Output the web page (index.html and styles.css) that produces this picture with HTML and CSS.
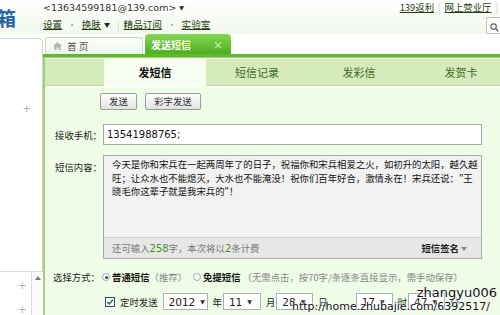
FILE: index.html
```html
<!DOCTYPE html>
<html lang="zh-CN">
<head>
<meta charset="utf-8">
<link rel="stylesheet" href="styles.css">
</head>
<body>
<div class="page">
  <header class="top">
    <div class="logo">箱</div>
    <div class="account">
      <div class="acct-line"><span class="email">&lt;13634599181@139.com&gt;</span><span class="caret">▼</span></div>
      <div class="menu"><a>设置</a><span class="dot">·</span><a>换肤</a><span class="caret">▼</span><span class="bar">|</span><a>精品订阅</a><span class="dot">·</span><a>实验室</a></div>
    </div>
    <div class="right">
      <div class="right-links"><a>139返利</a><span class="bar">|</span><a>网上营业厅</a><span class="bar">|</span></div>
      <div class="search"><svg width="9" height="9" viewBox="0 0 9 9"><circle cx="3.6" cy="3.6" r="2.7" fill="none" stroke="#666" stroke-width="1.2"/><path d="M5.6 5.6 L8.4 8.4" stroke="#666" stroke-width="1.4"/></svg></div>
    </div>
  </header>
  <div class="body">
    <aside class="side">
      <div class="side-card"><span class="plus plus-1">+</span></div>
      <div class="side-list">
        <div class="scroll"><span class="arrow-up"></span></div>
        <span class="plus">+</span>
        <span class="plus">+</span>
      </div>
    </aside>
    <main class="main">
      <div class="tabs">
        <div class="tab-home"><svg width="9" height="8" viewBox="0 0 9 8"><path d="M4.5 0 L9 4 H7.6 V8 H5.4 V5.4 H3.6 V8 H1.4 V4 H0 Z" fill="#b4b4b4"/></svg><span>首 页</span></div>
        <div class="tab-active"><span>发送短信</span><span class="close">×</span></div>
      </div>
      <div class="greenline"></div>
      <div class="panel">
        <div class="subtabs">
          <div class="stab-spacer"></div>
          <div class="stab on">发短信</div>
          <div class="stab">短信记录</div>
          <div class="stab">发彩信</div>
          <div class="stab">发贺卡</div>
        </div>
        <div class="content">
          <div class="actions"><button class="btn b-send">发送</button><button class="btn b-color">彩字发送</button></div>
          <div class="row row-phone">
            <label class="lbl">接收手机：</label>
            <div class="input">13541988765;</div>
          </div>
          <div class="row row-msg">
            <label class="lbl">短信内容：</label>
            <div class="textarea">
              <div class="msg">今天是你和宋兵在一起两周年了的日子，祝福你和宋兵相爱之火，如初升的太阳，越久越旺；让众水也不能熄灭，大水也不能淹没！祝你们百年好合，激情永在！宋兵还说："王晓毛你这辈子就是我宋兵的"！</div>
              <div class="ta-bar"><span class="count">还可输入<b>258</b>字，本次将以<b>2</b>条计费</span><span class="sign">短信签名<i class="tri"></i></span></div>
            </div>
          </div>
          <div class="row row-mode">
            <label class="lbl">选择方式：</label>
            <div class="modes">
              <span class="radio checked"></span><b>普通短信</b><span class="gray">（推荐）</span>
              <span class="radio"></span><b>免提短信</b><span class="gray hint">（无需点击，按70字/条逐条直接显示，需手动保存）</span>
            </div>
          </div>
          <div class="row row-time">
            <span class="lbl"></span>
            <div class="timer">
              <span class="check"><svg width="10" height="10" viewBox="0 0 10 10"><rect x="0.5" y="0.5" width="9" height="9" fill="#fff" stroke="#1f4f7f"/><path d="M2.2 5 L4.2 7 L7.8 2.8" fill="none" stroke="#2a6a2a" stroke-width="1.5"/></svg></span>
              <span class="tlabel">定时发送</span>
              <span class="sel w-year">2012<i class="dn">▼</i></span><span class="unit">年</span>
              <span class="sel w-month">11<i class="dn">▼</i></span><span class="unit">月</span>
              <span class="sel">28<i class="dn">▼</i></span><span class="unit">日</span>
              <span class="sel sel-hour">17<i class="dn">▼</i></span><span class="unit">时</span>
              <span class="sel">47<i class="dn">▼</i></span><span class="unit">分</span>
            </div>
          </div>
        </div>
      </div>
    </main>
  </div>
  <div class="watermark"><div class="wm1">zhangyu006</div><div class="wm2">http://home.zhubajie.com/6392517/</div></div>
</div>
</body>
</html>
```
FILE: styles.css
```css
*{box-sizing:border-box;margin:0;padding:0}
html,body{width:500px;height:315px;overflow:hidden;background:#fff}
body{font-family:"Noto Sans CJK SC","Noto Sans",sans-serif;font-size:9.4px;color:#222}
.page{position:relative;width:500px;height:315px;overflow:hidden}
a{color:#1e3e12;text-decoration:underline}

/* header */
.top{height:34px;display:flex;background:linear-gradient(#ffffff,#f1f8ec)}
.logo{width:44px;flex-shrink:0;margin-left:-3px;padding-top:7px;font-size:19px;font-weight:bold;color:#2463a8;line-height:22px}
.account{padding-left:2px;padding-top:1px}
.acct-line{font-family:"DejaVu Sans",sans-serif;font-size:9.5px;color:#333;line-height:13px;white-space:nowrap}
.caret{font-size:6px;margin-left:3px;color:#222;vertical-align:1px}
.menu{margin-top:3px;line-height:14px;white-space:nowrap;font-size:9.6px}
.menu .dot{color:#aaa;margin:0 5px}
.menu .caret{margin-left:3px;margin-right:3px}
.menu .bar,.right-links .bar{color:#ccc;margin:0 4px}
.right{margin-left:auto;display:flex;flex-direction:column;align-items:flex-end;padding-top:1px}
.right-links{line-height:13px;white-space:nowrap;font-size:9.4px;margin-right:-2px}
.search{width:16px;height:17px;margin-top:3px;margin-right:-2px;border:1px solid #b9c3b3;border-right:none;background:#fff;padding:3px 0 0 3px;border-radius:2px 0 0 2px}

/* body */
.body{display:flex;height:281px}
.side{width:43px;flex-shrink:0;display:flex;flex-direction:column}
.side-card{margin-top:4px;height:240px;border-top:1px solid #c8d9bc;border-right:1px solid #c8d9bc;border-top-right-radius:5px;display:flex;justify-content:flex-end;padding-right:11px;padding-top:65px}
.plus{color:#b0b0b0;font-size:10px;line-height:10px;font-family:"DejaVu Sans",sans-serif}
.side-list{flex:1;border-top:1px solid #d6ded1;position:relative;display:flex;flex-direction:column;align-items:flex-start;padding-left:18px;padding-top:9px;gap:14px}
.scroll{position:absolute;left:31px;top:0;bottom:0;width:12px;border-left:1px solid #dcdcdc;background:#fafafa}
.arrow-up{position:absolute;left:3px;top:4px;border:3px solid transparent;border-bottom:4px solid #777;border-top:none}

.main{flex:1;min-width:0;overflow:hidden;display:flex;flex-direction:column}
.tabs{height:20px;display:flex;align-items:flex-end;padding-left:2px}
.tab-home{width:98px;height:17px;border:1px solid #cbdcbd;border-bottom:none;border-radius:3px 3px 0 0;background:linear-gradient(#fdfefc,#eef5e9);display:flex;align-items:center;padding-left:7px;gap:5px;color:#555;font-size:9.6px}
.tab-active{margin-left:2px;width:86px;height:20px;border-radius:4px 4px 0 0;background:linear-gradient(#86d652,#4daf22);color:#fff;font-weight:bold;font-size:10px;display:flex;align-items:center;padding-left:6px}
.tab-active .close{margin-left:auto;margin-right:8px;font-weight:normal;font-size:10px;color:#e8ffe0}
.greenline{height:4px;background:#62b92f;border-bottom:1px solid #9fd57f}

.panel{flex:1;border-left:2px solid #9ad27a;background:#effce6;display:flex;flex-direction:column}
.subtabs{margin-top:1px;height:27px;display:flex;background:#d5ebbc;border-bottom:1px solid #bcd5a6;flex-shrink:0}
.stab-spacer{width:59px;flex-shrink:0}
.stab{width:102px;flex-shrink:0;text-align:center;line-height:26px;font-size:11px;color:#3d6d22}
.stab.on{background:#f7fdf0;color:#111;font-weight:bold;height:27px}
.content{flex:1;padding-top:5px;border-top:2px solid #fbfff8}

.actions{display:flex;gap:8px;padding-left:55px}
.btn{height:17px;padding:0;border:1px solid #9a9a9a;border-radius:2px;background:linear-gradient(#ffffff,#e2e2e2);font-family:"Noto Sans CJK SC",sans-serif;font-size:9.4px;color:#333;line-height:15px;text-align:center}
.b-send{width:37px}
.b-color{width:56px}

.row{display:flex}
.lbl{width:58px;text-align:right;flex-shrink:0;padding-right:1px}
.row-phone{margin-top:14px;align-items:center}
.input{width:379px;height:21px;border:1px solid #a9a9a9;background:#fff;padding-left:3px;line-height:19px;font-family:"DejaVu Sans",sans-serif;font-size:10px;color:#111}
.row-msg{margin-top:10px}
.row-msg .lbl{padding-top:5px}
.textarea{width:379px;height:104px;border:1px solid #a9a9a9;background:#f2f2f2;display:flex;flex-direction:column}
.msg{flex:1;padding:2px 0 0 8px;width:374px;line-height:13.5px;color:#111}
.ta-bar{height:21px;background:#e7e7e7;border-top:1px solid #d2d2d2;display:flex;align-items:center;padding:0 14px 0 8px;color:#777}
.ta-bar b{font-weight:normal;color:#4d8a1f;font-family:"DejaVu Sans",sans-serif;font-size:10px}
.sign{margin-left:auto;color:#222;font-weight:bold}
.tri{display:inline-block;vertical-align:middle;margin-left:2px;border:3px solid transparent;border-top:4px solid #6f8aa0;border-bottom:none}

.row-mode{margin-top:11px;align-items:center;white-space:nowrap}
.row-mode .lbl{width:56px}
.modes{display:flex;align-items:center}
.radio{width:8px;height:8px;border-radius:50%;border:1px solid #9aa7b3;background:#fff;margin:0 2px 0 1px;position:relative}
.radio.checked::after{content:"";position:absolute;left:1.5px;top:1.5px;width:3px;height:3px;border-radius:50%;background:#2a3f6a}
.modes b{font-weight:bold;color:#111}
.gray{color:#888}
.hint{margin-left:2px}
.modes .gray + .radio{margin-left:6px}

.row-time{margin-top:9px;align-items:center;white-space:nowrap}
.timer{display:flex;align-items:center;padding-left:2px}
.check{display:flex;margin-right:5px}
.tlabel{margin-right:5px}
.sel{height:17px;width:37px;border:1px solid #aab0b6;background:#fff;display:flex;align-items:center;padding-left:5px;font-family:"DejaVu Sans",sans-serif;font-size:10.5px;color:#222;gap:5px}
.sel.w-year{width:45px}
.sel.w-month{width:38px}
.dn{font-style:normal;font-size:6px;color:#333}
.unit{margin:0 1px 0 5px}
.sel-hour{margin-left:27px}

.watermark{position:absolute;right:3px;bottom:1px;text-align:right;font-family:"DejaVu Sans",sans-serif;color:#111;text-shadow:0 0 2px #fff,0 0 2px #fff,0 0 1px #fff}
.wm1{font-size:13px;line-height:14px}
.wm2{font-size:11px;line-height:14px;margin-right:7px}
```
